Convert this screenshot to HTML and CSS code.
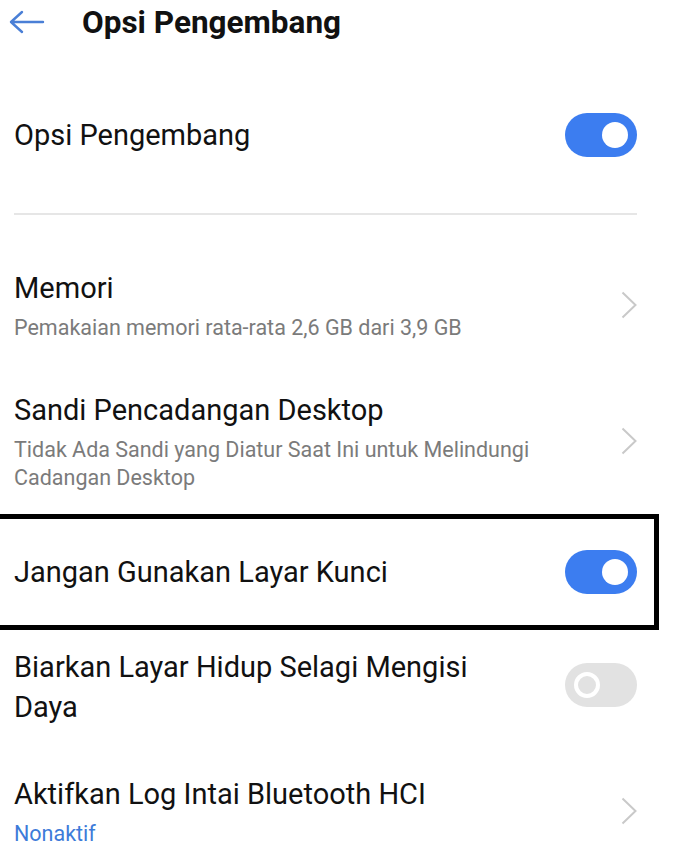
FILE: index.html
```html
<!DOCTYPE html>
<html lang="id">
<head>
  <meta charset="UTF-8">
  <meta name="viewport" content="width=device-width, initial-scale=1.0">
  <title>Opsi Pengembang</title>
  <link rel="stylesheet" href="styles.css">
</head>
<body>
  <!-- Header -->
  <div class="header">
    <svg class="back" width="36" height="24" viewBox="0 0 36 24">
      <path d="M2 12H34M13 2L2 12L13 22" fill="none" stroke="#4a7fd6" stroke-width="2.4" stroke-linecap="round" stroke-linejoin="round"/>
    </svg>
    <h1>Opsi Pengembang</h1>
  </div>

  <div class="settings">
    <!-- Master switch -->
    <div class="master">
      <div class="title">Opsi Pengembang</div>
      <div class="switch on"></div>
    </div>

    <div class="divider"></div>

    <div class="item">
      <div class="text">
        <div class="title">Memori</div>
        <div class="sub">Pemakaian memori rata-rata 2,6 GB dari 3,9 GB</div>
      </div>
      <svg class="chevron" width="16" height="28" viewBox="0 0 16 28">
        <path d="M1.5 1.5L14.5 14L1.5 26.5" fill="none" stroke="#c9c9c9" stroke-width="2"/>
      </svg>
    </div>

    <div class="item">
      <div class="text">
        <div class="title">Sandi Pencadangan Desktop</div>
        <div class="sub">Tidak Ada Sandi yang Diatur Saat Ini untuk Melindungi Cadangan Desktop</div>
      </div>
      <svg class="chevron" width="16" height="28" viewBox="0 0 16 28">
        <path d="M1.5 1.5L14.5 14L1.5 26.5" fill="none" stroke="#c9c9c9" stroke-width="2"/>
      </svg>
    </div>

    <div class="item highlight">
      <div class="text">
        <div class="title">Jangan Gunakan Layar Kunci</div>
      </div>
      <div class="switch on"></div>
    </div>

    <div class="item">
      <div class="text">
        <div class="title">Biarkan Layar Hidup Selagi Mengisi Daya</div>
      </div>
      <div class="switch off"></div>
    </div>

    <div class="item">
      <div class="text">
        <div class="title">Aktifkan Log Intai Bluetooth HCI</div>
        <div class="sub link">Nonaktif</div>
      </div>
      <svg class="chevron" width="16" height="28" viewBox="0 0 16 28">
        <path d="M1.5 1.5L14.5 14L1.5 26.5" fill="none" stroke="#c9c9c9" stroke-width="2"/>
      </svg>
    </div>
  </div>
</body>
</html>
```

FILE: styles.css
```css
body {
  margin: 0;
  font-family: Roboto, "Noto Sans", sans-serif;
  background-color: #fff;
  color: #111;
  overflow: hidden;
}
.header {
  height: 44px;
  display: flex;
  align-items: center;
  padding-left: 9px;
}
.header .back {
  margin-right: 37px;
}
.header h1 {
  margin: 0;
  font-size: 31.5px;
  font-weight: 700;
  color: #111;
}
.settings {
  padding: 0 36px 0 14px;
}
.title {
  font-size: 29px;
  line-height: 40px;
}
.sub {
  font-size: 21.5px;
  line-height: 28px;
  color: #7b7b7b;
  margin-top: 6px;
}
.sub.link {
  color: #3d7bd9;
}
.master {
  height: 90px;
  margin-top: 46px;
  display: flex;
  align-items: center;
  justify-content: space-between;
}
.divider {
  height: 2px;
  background-color: #e6e6e6;
  margin: 33px 0 29px 0;
}
.item {
  display: flex;
  align-items: center;
  justify-content: space-between;
  padding: 24px 0;
}
.item .text {
  flex: 1;
  padding-right: 40px;
}
.item.highlight {
  border: 5px solid #000;
  margin: -2px -22px -7px -19px;
  padding: 31px 17px 31px 14px;
}
.item.highlight + .item {
  padding-bottom: 23px;
}
.item.highlight + .item .switch {
  margin-top: -4px;
}
.chevron {
  flex-shrink: 0;
}

/* Toggle switches */
.switch {
  flex-shrink: 0;
  width: 72px;
  height: 44px;
  border-radius: 22px;
  position: relative;
}
.switch::after {
  content: "";
  position: absolute;
  top: 9px;
  width: 26px;
  height: 26px;
  border-radius: 50%;
  box-sizing: border-box;
}
.switch.on {
  background-color: #3c7df0;
}
.switch.on::after {
  right: 9px;
  background-color: #fff;
}
.switch.off {
  background-color: #e2e2e2;
}
.switch.off::after {
  left: 9px;
  border: 4px solid #fff;
  background-color: #e2e2e2;
}
```
